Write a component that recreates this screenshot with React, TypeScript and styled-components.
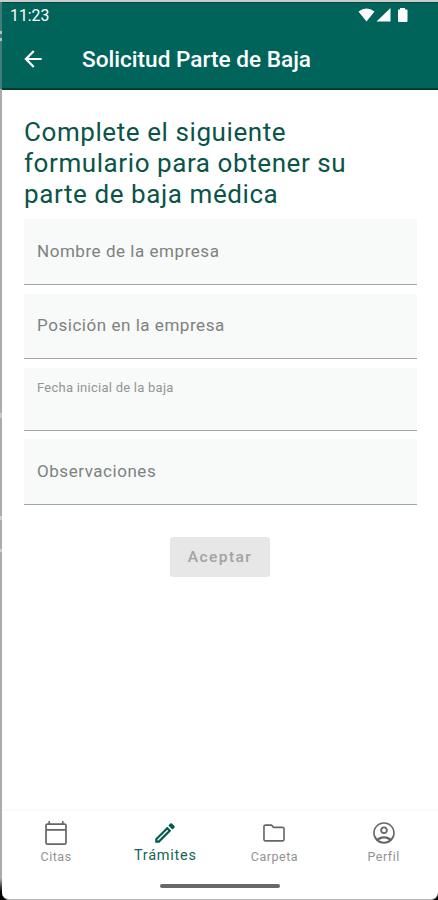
import React from "react";
import styled, { createGlobalStyle } from "styled-components";

const Global = createGlobalStyle`
  *, *::before, *::after { box-sizing: border-box; }
  body { margin: 0; background: #000; font-family: Roboto, sans-serif; }
`;

const Stage = styled.div`
  width: 438px;
  height: 900px;
  display: grid;
  grid-template-columns: 2px 1fr;
  overflow: hidden;
  background: linear-gradient(#c9cccb 0 2px, #b0b0b2 2px 878px, #000 892px);
`;

const Edge = styled.div`
  display: flex;
  flex-direction: column;
  padding-top: 2px;
`;

const EdgeSegment = styled.div<{ $h: number; $c: string }>`
  height: ${(p) => p.$h}px;
  background: ${(p) => p.$c};
`;

const Phone = styled.div`
  height: 898px;
  margin-top: 2px;
  display: flex;
  flex-direction: column;
  background: #fff;
  border-bottom: 1px solid #b5b5b5;
  border-radius: 0 0 7px 7px;
  overflow: hidden;
`;

const Header = styled.header`
  height: 88px;
  flex: none;
  background: #00645b;
  border-top: 1px solid #00483f;
  border-bottom: 2px solid #053c2c;
  color: #fff;
`;

const StatusBar = styled.div`
  height: 25px;
  display: flex;
  align-items: center;
  justify-content: space-between;
  padding: 0 28px 0 8px;
`;

const Clock = styled.span`
  font-size: 15.8px;
  line-height: 24px;
`;

const StatusIcons = styled.div`
  display: flex;
  padding-bottom: 2px;
  svg { display: block; }
`;

const AppBar = styled.div`
  height: 62px;
  display: flex;
  align-items: center;
  padding-left: 18px;
`;

const BackButton = styled.button`
  width: 26px;
  height: 26px;
  padding: 0;
  border: 0;
  background: none;
  color: inherit;
  svg { display: block; }
`;

const Title = styled.h1`
  margin: 1px 0 0 36px;
  font-size: 22.6px;
  font-weight: 500;
  line-height: 28px;
  letter-spacing: 0;
  white-space: nowrap;
`;

const Main = styled.main`
  flex: 1;
  padding: 27px 22px 0;
  display: flex;
  flex-direction: column;
`;

const Heading = styled.h2`
  margin: 0;
  font-size: 26px;
  font-weight: 400;
  line-height: 31px;
  letter-spacing: 0.58px;
  color: #0a5448;
  white-space: nowrap;
`;

const Form = styled.form`
  margin-top: 9px;
  display: flex;
  flex-direction: column;
`;

const Field = styled.label<{ $h: number; $gap: number; $raised?: boolean }>`
  width: 393px;
  height: ${(p) => p.$h}px;
  margin-bottom: ${(p) => p.$gap}px;
  padding: ${(p) => (p.$raised ? "10px 13px" : "0 13px 2px")};
  display: flex;
  align-items: ${(p) => (p.$raised ? "flex-start" : "center")};
  background: #f7faf9;
  border-bottom: 1.5px solid #a1a5a4;
  color: ${(p) => (p.$raised ? "#929594" : "#7e8180")};
  font-size: ${(p) => (p.$raised ? 13 : 17)}px;
  line-height: 20px;
  letter-spacing: ${(p) => (p.$raised ? 0.25 : 0.54)}px;
`;

const Submit = styled.button`
  align-self: center;
  width: 100px;
  height: 40px;
  margin-top: 32px;
  padding: 0;
  border: 0;
  border-radius: 3px;
  background: #e7e7e7;
  color: #a2a2a2;
  font: 500 15.5px Roboto, sans-serif;
  letter-spacing: 1.45px;
`;

const BottomNav = styled.nav`
  height: 90px;
  flex: none;
  display: flex;
  flex-direction: column;
  align-items: center;
  border-top: 2px solid #fafafa;
`;

const Tabs = styled.div`
  width: 100%;
  height: 73px;
  display: grid;
  grid-template-columns: repeat(4, 109.2px);
  margin-left: -1px;
`;

const Tab = styled.a<{ $active?: boolean }>`
  display: flex;
  flex-direction: column;
  align-items: center;
  padding-top: 9px;
  color: ${(p) => (p.$active ? "#00594c" : "#666")};
  svg { display: block; }
`;

const TabLabel = styled.span<{ $active?: boolean }>`
  margin-top: ${(p) => (p.$active ? 1 : 2)}px;
  font-size: ${(p) => (p.$active ? 14.5 : 12.5)}px;
  line-height: 17px;
  letter-spacing: ${(p) => (p.$active ? 0.75 : 0.5)}px;
  color: ${(p) => (p.$active ? "#146657" : "#929292")};
`;

const HomeHandle = styled.div`
  width: 120px;
  height: 4px;
  border-radius: 2px;
  background: #686868;
`;

const Icon = ({ d, size = 26 }: { d: string; size?: number }) => (
  <svg width={size} height={size} viewBox="0 0 24 24" fill="currentColor">
    <path d={d} />
  </svg>
);

const edge: [number, string][] = [
  [29, "#417e7b"], [3, "#b6beb9"], [4, "#417e7b"], [3, "#b6beb9"], [48, "#417e7b"],
  [324, "#ababae"], [5, "#c8c8c8"], [98, "#ababae"], [4, "#cecece"],
  [29, "#ababae"], [3, "#cecece"], [326, "#ababae"],
];

const fields = [
  { label: "Nombre de la empresa", h: 66, gap: 9 },
  { label: "Posición en la empresa", h: 65, gap: 9 },
  { label: "Fecha inicial de la baja", h: 63, gap: 8, raised: true },
  { label: "Observaciones", h: 66, gap: 0 },
];

const tabs = [
  { label: "Citas", d: "M20 3h-1V1h-1.500v2h-11V1H5v2H4c-1.100 0-2 .9-2 2v16c0 1.100.9 2 2 2h16c1.100 0 2-.9 2-2V5c0-1.100-.9-2-2-2zm.4 18.400H3.600V10h16.800v11.400zm0-13H3.600V4.600h16.800v3.800z" },
  { label: "Trámites", active: true, d: "m14.060 9.020.920.920L5.920 19H5v-.92l9.060-9.060M17.660 3c-.25 0-.51.1-.7.290l-1.830 1.830 3.750 3.750 1.830-1.830c.39-.39.39-1.020 0-1.410l-2.340-2.340c-.2-.2-.45-.29-.68-.29zm-3.600 3.190L3 17.250V21h3.750L17.810 9.940l-3.750-3.750z" },
  { label: "Carpeta", d: "M9.300 5.500 11.300 7.500H20.500V18.500H3.500V5.500H9.300M10 4H4c-1.100 0-2 .9-2 2v12c0 1.100.9 2 2 2h16c1.100 0 2-.9 2-2V8c0-1.100-.9-2-2-2h-8l-2-2z" },
  { label: "Perfil", d: "M12 2C6.480 2 2 6.480 2 12s4.480 10 10 10 10-4.480 10-10S17.520 2 12 2zM7.350 18.500C8.660 17.560 10.260 17 12 17s3.340.56 4.650 1.500C15.340 19.440 13.740 20 12 20s-3.340-.56-4.650-1.500zm10.790-1.380C16.450 15.800 14.320 15 12 15s-4.450.8-6.140 2.120C4.350 15.730 3.500 13.950 3.500 12c0-4.700 3.800-8.500 8.500-8.500s8.500 3.800 8.500 8.500c0 1.950-.85 3.730-2.360 5.120zM12 6c-1.930 0-3.500 1.570-3.500 3.500S10.070 13 12 13s3.500-1.570 3.500-3.500S13.930 6 12 6zm0 5.300c-1 0-1.800-.8-1.800-1.800S11 7.700 12 7.700s1.800.8 1.800 1.800-.8 1.800-1.800 1.800z" },
];

export default function App() {
  return (
    <>
      <Global />
      <Stage>
        <Edge>
          {edge.map(([h, c], i) => (
            <EdgeSegment key={i} $h={h} $c={c} />
          ))}
        </Edge>
        <Phone>
          <Header>
            <StatusBar>
              <Clock>11:23</Clock>
              <StatusIcons>
                <svg width="52" height="16" viewBox="0 0 52 16" fill="#fff">
                  <path d="M0.500 4.500Q8.500-1.500 16.500 4.500L8.500 14.500Z" />
                  <path d="M32.500 1V14.500H18.500Z" />
                  <path d="M40.500 2.500H42V1h5v1.500h1.500Q49.500 2.500 49.500 3.500V14q0 1-1 1h-7.500q-1 0-1-1V3.500q0-1 .5-1Z" />
                </svg>
              </StatusIcons>
            </StatusBar>
            <AppBar>
              <BackButton aria-label="Volver">
                <Icon d="M20 11H7.830l5.590-5.590L12 4l-8 8 8 8 1.410-1.410L7.830 13H20v-2z" />
              </BackButton>
              <Title>Solicitud Parte de Baja</Title>
            </AppBar>
          </Header>
          <Main>
            <Heading>
              Complete el siguiente
              <br />
              formulario para obtener su
              <br />
              parte de baja médica
            </Heading>
            <Form>
              {fields.map((f) => (
                <Field key={f.label} $h={f.h} $gap={f.gap} $raised={f.raised}>
                  {f.label}
                </Field>
              ))}
              <Submit type="button" disabled>
                Aceptar
              </Submit>
            </Form>
          </Main>
          <BottomNav>
            <Tabs>
              {tabs.map((t) => (
                <Tab key={t.label} $active={t.active}>
                  <Icon d={t.d} />
                  <TabLabel $active={t.active}>{t.label}</TabLabel>
                </Tab>
              ))}
            </Tabs>
            <HomeHandle />
          </BottomNav>
        </Phone>
      </Stage>
    </>
  );
}
